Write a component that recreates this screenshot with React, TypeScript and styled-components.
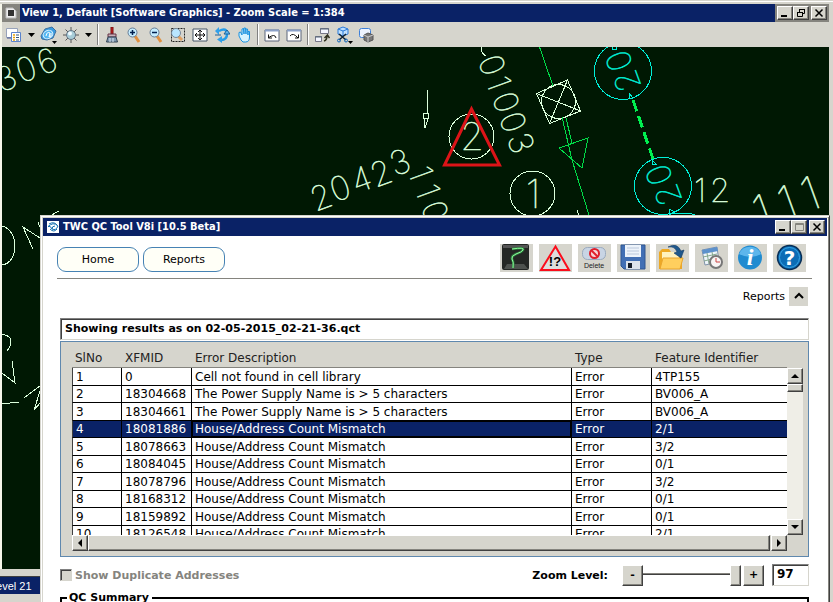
import React, { useState } from "react";
import styled, { createGlobalStyle, css } from "styled-components";

const face = "#d6d5cd";
const navy = "#0a2266";
const ui = '"DejaVu Sans", Verdana, sans-serif';
const caption = '"DejaVu Sans Condensed", "DejaVu Sans", Tahoma, sans-serif';

const Global = createGlobalStyle`
  *, *::before, *::after { box-sizing: border-box; }
  html, body, #root { height: 100%; margin: 0; }
  body { background: ${face}; overflow: hidden; font-family: ${ui}; font-size: 12px; color: #000; }
  button, input { font: inherit; color: inherit; margin: 0; padding: 0; border-radius: 0; }
`;

const raised = css`
  background: ${face};
  border: 1px solid;
  border-color: #fff #404040 #404040 #fff;
  box-shadow: inset -1px -1px 0 #85847e;
`;

const sunken = css`
  background: #fff;
  border: 1px solid;
  border-color: #808080 #d6d5cd #d6d5cd #808080;
  box-shadow: inset 1px 1px 0 #404040;
`;

const Desktop = styled.div`
  position: relative;
  display: flex;
  flex-direction: column;
  height: 100vh;
  padding: 4px 4px 0 2px;
  background: linear-gradient(${face} 1px, #fff 1px 2px, ${face} 2px 4px, transparent 4px),
    linear-gradient(90deg, #f6f6ea 2px, ${face} 2px);
  overflow: hidden;
`;

const TitleBar = styled.header`
  display: flex;
  align-items: center;
  flex: none;
  height: 18px;
  background: ${navy};
  color: #fff;
`;

const Title = styled.h1`
  flex: 1;
  margin: 0;
  font: bold 11px/18px ${caption};
  white-space: nowrap;
`;

const MainMark = styled.span`
  display: grid;
  place-items: center;
  width: 18px;
  height: 18px;
  margin-right: 2px;
  background: #85847e;
`;

const Brand = styled.span`
  display: grid;
  width: 12px;
  height: 12px;
  margin: 0 4px;
  background: #fff;
`;

const Captions = styled.div<{ $tray?: boolean }>`
  display: flex;
  align-items: center;
  height: 18px;
  padding: 0 2px;
  background: ${(p) => (p.$tray ? "#85847e" : navy)};
`;

const CaptionButton = styled.button<{ $apart?: boolean }>`
  ${raised}
  display: grid;
  place-items: center;
  width: 16px;
  height: 14px;
  margin-left: ${(p) => (p.$apart ? 2 : 0)}px;
  color: #000;
`;

const ToolStrip = styled.div`
  display: flex;
  align-items: center;
  flex: none;
  height: 25px;
  padding-left: 1px;
  background: ${face};
`;

const Tool = styled.button`
  display: grid;
  place-items: center;
  width: 22px;
  height: 24px;
  border: 0;
  background: none;
`;

const Drop = styled(Tool)`
  width: 13px;
`;

const Divider = styled.span`
  width: 2px;
  height: 21px;
  margin: 0 2px;
  border-left: 1px solid #808080;
  border-right: 1px solid #fff;
`;

const MapView = styled.main`
  flex: 1;
  min-height: 0;
  background: #001803;
  overflow: hidden;

  svg {
    display: block;
    width: 100%;
    height: 100%;
  }
`;

const StatusArea = styled.footer`
  flex: none;
  height: 33px;
  padding-top: 7px;
  margin: 0 0 0 -2px;
  background: ${face};
`;

const Status = styled.div`
  height: 18px;
  border-top: 1px solid #404040;
  background: ${navy};
  color: #fff;
  font: 11px/18px "Liberation Sans", Arial, sans-serif;
  text-indent: -10px;
`;

const Dialog = styled.section`
  position: absolute;
  top: 215px;
  right: 3px;
  bottom: -20px;
  left: 40px;
  display: flex;
  flex-direction: column;
  border: 1px solid ${face};
  border-right-color: #404040;
  box-shadow: inset 1px 1px 0 #fff, inset -1px 0 0 #85847e, inset 2px 2px 0 ${face};
  padding: 2px;
  background: #fff;
`;

const Content = styled.div`
  padding: 8px 15px 0 14px;
`;

const ActionBar = styled.nav`
  display: flex;
  align-items: flex-start;
  gap: 4px;
  height: 35px;
  border-bottom: 1px solid #85847e;
`;

const PillButton = styled.button`
  width: 82px;
  height: 25px;
  margin-top: 3px;
  border: 1px solid #4682b4;
  border-radius: 9px;
  background: #fffff7;
  font-size: 11px;
`;

const Tiles = styled.div`
  display: flex;
  gap: 6px;
  margin: 0 6px 0 auto;
`;

const Tile = styled.button`
  display: grid;
  place-items: center;
  width: 33px;
  height: 28px;
  border: 0;
  background: ${face};
`;

const Section = styled.div`
  margin: 0 3px;
`;

const Collapser = styled.div`
  display: flex;
  align-items: center;
  justify-content: flex-end;
  gap: 4px;
  height: 20px;
  margin: 7px 1px 12px 0;
  font-size: 11px;
`;

const SquareButton = styled.button`
  display: grid;
  place-items: center;
  width: 19px;
  height: 19px;
  border: 0;
  background: ${face};
`;

const ResultField = styled.input`
  ${sunken}
  display: block;
  width: 100%;
  height: 22px;
  padding: 0 4px 2px;
  font-size: 11px;
  font-weight: bold;
`;

const GridPanel = styled.div`
  margin-top: 1px;
  height: 216px;
  padding: 6px 5px 0 11px;
  border: 1px solid #5f88ae;
  background: ${face};
`;

const GridBody = styled.div`
  display: grid;
  grid-template-columns: minmax(0, 1fr) 16px;
  height: 187px;
`;

const Clip = styled.div`
  overflow: hidden;
`;

const Table = styled.table`
  width: 100%;
  border-collapse: separate;
  border-spacing: 0;
  table-layout: fixed;
  font-size: 12px;
  line-height: 16px;
  text-align: left;
  white-space: nowrap;

  th {
    height: 20px;
    padding: 1px 0 0 3px;
    border-bottom: 1px solid #85847e;
    font-weight: normal;
    color: #222;
  }

  td {
    height: 18px;
    padding: 0 0 0 3px;
    border-right: 1px solid #000;
    border-bottom: 1px solid #000;
    background: #fff;
  }

  tbody tr:nth-child(even) td {
    height: 17px;
  }

  td:first-child {
    border-left: 1px solid #404040;
  }

  td:last-child {
    border-right: 0;
  }

  tbody tr[aria-selected="true"] td {
    background: ${navy};
    color: #fff;
  }

  tbody tr[aria-selected="true"] td:nth-child(3) {
    box-shadow: inset 1px 1px 0 #000, inset -1px -1px 0 #000;
  }
`;

const Col = styled.col<{ $w?: number }>`
  width: ${(p) => (p.$w ? `${p.$w}px` : "auto")};
`;

const VScroll = styled.div`
  display: flex;
  flex-direction: column;
  margin-top: 20px;
  background: #efeee7;
`;

const HScroll = styled.div`
  display: flex;
  height: 16px;
  margin-right: 16px;
`;

const ScrollButton = styled.button`
  ${raised}
  display: grid;
  place-items: center;
  flex: none;
  width: 16px;
  height: 16px;
`;

const VThumb = styled.div`
  ${raised}
  height: 8px;
`;

const Track = styled.div`
  flex: 1;
`;

const HThumb = styled.div`
  ${raised}
  flex: 1;
  margin-right: 1px;
`;

const Controls = styled.div`
  display: flex;
  align-items: center;
  height: 22px;
  margin-top: 7px;
  font-size: 11px;
  font-weight: bold;
`;

const Check = styled.input`
  ${sunken}
  appearance: none;
  width: 12px;
  height: 12px;
  margin-right: 3px;
  background: ${face};
`;

const CheckLabel = styled.label`
  display: flex;
  align-items: center;
  margin-right: auto;
  color: #85847e;
`;

const ZoomLabel = styled.label`
  margin-right: 14px;
`;

const StepButton = styled.button`
  ${raised}
  width: 21px;
  height: 21px;
  line-height: 16px;
`;

const Slider = styled.input`
  appearance: none;
  width: 98px;
  height: 21px;
  margin-right: 2px;
  background: linear-gradient(#85847e 1px, #404040 1px) center 8px / 100% 2px no-repeat;

  &::-webkit-slider-thumb {
    ${raised}
    appearance: none;
    width: 11px;
    height: 21px;
  }
`;

const ZoomField = styled.input`
  ${sunken}
  width: 37px;
  height: 22px;
  margin-left: 8px;
  padding: 0 4px 3px;
  font-size: 12px;
`;

const Summary = styled.fieldset`
  height: 60px;
  margin: 5px 0 0;
  padding: 0 5px;
  border: 2px solid #000;
  font-size: 11px;
  font-weight: bold;

  legend {
    padding: 0 3px 0 2px;
    line-height: 14px;
  }
`;

const Glyph = ({ x, y, r = 0, s = 33, c = "#dcffdc", children }: {
  x: number; y: number; r?: number; s?: number; c?: string; children: string;
}) => (
  <text
    transform={`translate(${x} ${y}) rotate(${r})`}
    y={Math.round(s * 0.36)}
    fontSize={s}
    fontFamily='Inter, Roboto, sans-serif'
    fontWeight={100}
    textAnchor="middle"
    fill={c}
    stroke={c}
    strokeWidth="0.5"
  >
    {children}
  </text>
);

const pale = "#dcffdc";
const cyan = "#00f0d8";

const marks: [string, number, number, number][] = [
  ["3", 6, 78, -23], ["0", 26, 69, -20], ["6", 47, 61, -20],
  ["2", 321, 197, -20], ["0", 340, 188, -20], ["4", 361, 179, -20], ["2", 381, 173, -20], ["3", 400, 162, -20],
  ["1", 421, 173, 70], ["1", 428, 191, 70], ["0", 435, 211, 70],
  ["0", 492, 65, 70], ["1", 499, 83, 70], ["0", 506, 102, 70], ["0", 513, 122, 70], ["3", 521, 143, 70],
  ["1", 700, 190, 0], ["2", 720, 190, 0],
];

const Drawing = () => (
  <svg viewBox="2 47 827 522" preserveAspectRatio="xMinYMin slice" fill="none" role="img" aria-label="Network map">
    {marks.map(([t, x, y, r], i) => <Glyph key={i} x={x} y={y} r={r}>{t}</Glyph>)}
    <Glyph x={472} y={136} s={38}>2</Glyph>
    <Glyph x={533} y={194} s={40}>1</Glyph>
    <Glyph x={619} y={61} r={-110} c={cyan}>0</Glyph>
    <Glyph x={627} y={81} r={-110} c={cyan}>2</Glyph>
    <Glyph x={659} y={175} r={-110} c={cyan}>0</Glyph>
    <Glyph x={668} y={195} r={-110} c={cyan}>2</Glyph>
    <Glyph x={762} y={211} r={-20} s={46}>1</Glyph>
    <Glyph x={787} y={202} r={-20} s={46}>1</Glyph>
    <Glyph x={810} y={193} r={-20} s={46}>1</Glyph>
    <g stroke={pale} shapeRendering="crispEdges">
      <circle cx="471.500" cy="136.500" r="22.500" />
      <circle cx="532.500" cy="193.500" r="22.500" />
      <path d="M427.500 90V113M423.500 113.500h5v5h-5zM424 119l1 9 3-9M482 47q-2 6 4 9" />
      <path d="M536.500 93.500L567.500 80 580.500 111 549.500 123.500zM536.500 93.500L580.500 111M567.500 80L549.500 123.500" />
      <circle cx="558.500" cy="101.500" r="17" />
      <path d="M2 226C10 228 15 236 15 246S10 264 2 265M33 249L23 227 40 238M38 222l3 8M50 216l9-5" />
      <path d="M2 334q9 2 9 7t-4 10M12 361l3 22-13-10M24 398l17-13M41 388l-7 22 7-8M2 404l17-2M577 210l2 6" />
    </g>
    <g stroke="#00dc48" shapeRendering="crispEdges">
      <path d="M539.500 47L553 86M562 117L572 160 589 215M566 118L572 143M559 148L588 138 582 168z" />
      <path d="M633 100L653 159" stroke="#00f050" strokeWidth="3" strokeDasharray="12 5" />
    </g>
    <g stroke={cyan} shapeRendering="crispEdges">
      <circle cx="623" cy="71" r="28.500" />
      <circle cx="663" cy="186" r="28.500" />
      <path d="M629 93v6l4-1zM652 160v4h4zM669 209v6l6-3zM673 213h16l6 2M612 49h4v-2M612 49v-2" />
    </g>
    <path d="M471.500 109L444.500 165H499.500z" stroke="#dc1418" strokeWidth="3" />
  </svg>
);

const Ico = ({ w = 16, h = 16, children }: { w?: number; h?: number; children: React.ReactNode }) => (
  <svg width={w} height={h} viewBox={`0 0 ${w} ${h}`} fill="none" aria-hidden="true">{children}</svg>
);

const Arrow = ({ d }: { d: "up" | "down" | "left" | "right" }) => {
  const paths = { up: "M0 6h8L4 2z", down: "M0 2h8L4 6z", left: "M6 0v8L2 4z", right: "M2 0v8l4-4z" };
  return <Ico w={8} h={8}><path d={paths[d]} fill="#000" /></Ico>;
};

const Lens = ({ minus }: { minus?: boolean }) => (
  <Ico>
    <path d="M9 9l4 6" stroke="#e09040" strokeWidth="3" />
    <circle cx="6.500" cy="5.500" r="4.500" fill="#c4ecff" stroke="#667d96" />
    <path d={minus ? "M4 5.500h5" : "M4 5.500h5M6.500 3v5"} stroke="#002050" strokeWidth="1.500" />
  </Ico>
);

const icons = {
  view: <Ico><path d="M.5 1.500h11v9H.5z" fill="#fff" stroke="#98a3ba" /><path d="M1 11h6" stroke="#405090" /><path d="M5.500 5.500h9v9h-9z" fill="#fff" stroke="#5b83cc" /><path d="M7 8h2M7 10.500h2M7 13h2" stroke="#e8a000" strokeWidth="1.500" /><path d="M10 8h3M10 10.500h3M10 13h3" stroke="#357" /></Ico>,
  display: <Ico w={18} h={18}><path d="M1 10l4-7 7-2 4 4-3 7-6 2-5-1z" fill="#3a9be0" stroke="#3d6fa0" /><ellipse cx="8" cy="8.500" rx="5" ry="4" transform="rotate(-25 8 8.500)" fill="#57b8f2" stroke="#e4f6ff" /><path d="M6 10q1-5 4-3l-1 4q3 0 2-4" stroke="#fff" /><path d="M12 15h5l-2.500 3z" fill="#000" /></Ico>,
  light: <Ico><path d="M8 0v16M0 8h16M2.500 2.500l11 11M13.500 2.500l-11 11" stroke="#555" /><circle cx="8" cy="8" r="4.500" fill="#a8cdd8" stroke="#678" /><circle cx="7" cy="6.500" r="2" fill="#effaff" /></Ico>,
  brush: <Ico><path d="M7 0h2v7H7z" fill="#d02020" stroke="#711" /><path d="M4 7h8v3H4z" fill="#c8b0b8" stroke="#634" /><path d="M4 10L2.500 15h11L12 10z" fill="#8098b0" stroke="#345" /><path d="M6 11v4M9 11v4" stroke="#dde8f4" /></Ico>,
  area: <Ico><path d="M1.500 1.500h13v13h-13z" stroke="#222" strokeDasharray="2 1" /><path d="M8 9l4 4" stroke="#e0a060" strokeWidth="3" /><circle cx="6" cy="6" r="4.500" fill="#b9e6ff" stroke="#789" /></Ico>,
  fit: <Ico><path d="M1 2h14v12H1z" fill="#fff" stroke="#456" /><path d="M3 8h10M8 3v10M5 6L3 8l2 2M11 6l2 2-2 2M6 5l2-2 2 2M6 11l2 2 2-2" stroke="#111" /></Ico>,
  rotate: <Ico><path d="M5 4q8-4 8 3 0 6-6 6" stroke="#249be8" strokeWidth="2.500" /><path d="M5 0v8L1 4zM8 9v7l-5-3.500z" fill="#31a0ea" /><path d="M1 8h6M10 7h6l-3-4z" stroke="#1c5f98" fill="#5fbaf2" /></Ico>,
  hand: <Ico><path d="M3 9V5.500L4.500 5 6 8V2l1.500-.5L8 7V1h1.500L10 7V2h1.500L12 8V4.500h1.500V10q0 5-4 5H7Q5 14 3 9z" fill="#d6f3ff" stroke="#1791e0" /></Ico>,
  prev: <Ico><path d="M1 3h14v11H1z" fill="#fff" stroke="#5b6478" /><path d="M1 3.500h14" stroke="#8ba0c8" strokeWidth="2" /><path d="M12 11Q11 6 4 11M4.500 7.500V11H8" stroke="#111" /></Ico>,
  next: <Ico><path d="M1 3h14v11H1z" fill="#fff" stroke="#5b6478" /><path d="M1 3.500h14" stroke="#8ba0c8" strokeWidth="2" /><path d="M4 9Q7 5 12 11M12.500 7.500V11H9" stroke="#111" /></Ico>,
  copy: <Ico><path d="M6.500 1.500h8v5h-8zM1.500 9.500h6v5h-6z" fill="#f4f6ff" stroke="#778" /><path d="M6 2h9M1 10h7" stroke="#567" /><path d="M10 14q3-1 3-5M10.500 11l3-3 2 3" stroke="#332" strokeWidth="1.500" /></Ico>,
  clip: <Ico w={18} h={18}><path d="M3 3l5-2 5 2v5l-5 2-5-2z" fill="#bfe0ff" stroke="#2a7ad8" /><path d="M3 3l5 2 5-2M8 5v5" stroke="#2a7ad8" /><path d="M4 8l7 6M11 8l-7 6" stroke="#123" strokeWidth="1.500" /><circle cx="4" cy="14.500" r="1.500" stroke="#16b" /><circle cx="11" cy="14.500" r="1.500" stroke="#16b" /><path d="M13 15h5l-2.500 3z" fill="#000" /></Ico>,
  mask: <Ico><rect x="1.500" y="1.500" width="11" height="9" rx="2" fill="#eef4ff" stroke="#3e80d8" /><path d="M6 8l4-2 5 2v5l-5 2-4-2z" fill="#777" stroke="#555" /><path d="M6 8l4 2 5-2M10 10v5" stroke="#ccc" /></Ico>,
};

const TileArt = ({ w = 33, children }: { w?: number; children: React.ReactNode }) => <Ico w={w} h={28}>{children}</Ico>;

const tiles: [string, React.ReactNode][] = [
  ["Trace", <TileArt><rect x="2" y="0" width="27" height="26" rx="2" fill="#242724" /><path d="M3 1h25v3H3z" fill="#555" /><path d="M4 25l3-5h17l4 5z" fill="#6a706a" opacity=".6" /><path d="M12 5q13-2 11 1-1 2-7 4-5 2-4 5 2 3 1 9" stroke="#2f7a3e" strokeWidth="2.500" /><path d="M12 5q13-2 11 1-1 2-7 4-5 2-4 5 2 3 1 9" stroke="#8dff9c" /></TileArt>],
  ["Errors", <TileArt><path d="M16.500 2.500L2 26h28z" fill="#ddd" stroke="#fb0d1c" strokeWidth="2" /><text x="16" y="22" textAnchor="middle" fontFamily="Liberation Sans, Arial, sans-serif" fontSize="13" fontWeight="bold" fill="#000">!?</text></TileArt>],
  ["Delete", <TileArt><rect x="4.500" y="3.500" width="23" height="12" rx="5" fill="#c8d4e4" stroke="#9aaabe" /><circle cx="16.500" cy="9.500" r="4.500" fill="#f6d6d8" stroke="#e0202c" strokeWidth="2" /><path d="M13.500 6.500l6 6" stroke="#e0202c" strokeWidth="2" /><text x="16" y="24" textAnchor="middle" fontFamily="Liberation Sans, Arial, sans-serif" fontSize="7" fill="#222">Delete</text></TileArt>],
  ["Save", <TileArt><path d="M4 1h24v24H7l-3-3z" fill="#426fb4" stroke="#315790" /><path d="M8 1h16v12H8z" fill="#edf3fa" /><path d="M10 4h12M10 7h12M10 10h12" stroke="#bbc8dc" /><path d="M9 17h14v8H9z" fill="#dde3eb" /><path d="M11 19h4v5h-4z" fill="#151c28" /></TileArt>],
  ["Open", <TileArt><path d="M3 8l3-3h7l2 3h11v17H3z" fill="#eda925" /><path d="M6 8h17v8H6z" fill="#fff2be" /><path d="M4 25l3-11h20l-3 11z" fill="#ffcf5e" stroke="#e9a52d" /><path d="M12 3q9-5 13 4l3-1-3 8-7-5 3-1q-2-6-9-5z" fill="#20588c" stroke="#143d68" strokeWidth=".6" /></TileArt>],
  ["Schedule", <TileArt><path d="M7 6l15-3 2 15-14 3z" fill="#eef4fa" stroke="#8193aa" /><path d="M7 6l15-3 1 4L8 10z" fill="#5d91cc" /><path d="M8 13l14-3M9 17l12-3M12 9l2 11M17 8l2 10" stroke="#86a98f" /><circle cx="21" cy="18" r="6" fill="#f8f4f4" stroke="#777" strokeWidth="2" /><path d="M21 14v4h4" stroke="#c44" /></TileArt>],
  ["Information", <TileArt><circle cx="16" cy="13.500" r="12" fill="#208bd0" /><path d="M5 10a12 12 0 0 1 22 0q-10 6-22 0z" fill="#5db6ec" /><text x="16" y="21" textAnchor="middle" fontFamily="Liberation Serif, serif" fontSize="24" fontStyle="italic" fontWeight="bold" fill="#fff">i</text></TileArt>],
  ["Help", <TileArt><circle cx="16.500" cy="13.500" r="12" fill="#0b6db6" stroke="#082e56" strokeWidth="1.500" /><circle cx="16.500" cy="13.500" r="10" stroke="#39a5e5" /><text x="16.500" y="21" textAnchor="middle" fontFamily="DejaVu Sans, sans-serif" fontSize="20" fontWeight="bold" fill="#fff">?</text></TileArt>],
];

const rows = [
  ["1", "0", "Cell not found in cell library", "Error", "4TP155"],
  ["2", "18304668", "The Power Supply Name is > 5 characters", "Error", "BV006_A"],
  ["3", "18304661", "The Power Supply Name is > 5 characters", "Error", "BV006_A"],
  ["4", "18081886", "House/Address Count Mismatch", "Error", "2/1"],
  ["5", "18078663", "House/Address Count Mismatch", "Error", "3/2"],
  ["6", "18084045", "House/Address Count Mismatch", "Error", "0/1"],
  ["7", "18078796", "House/Address Count Mismatch", "Error", "3/2"],
  ["8", "18168312", "House/Address Count Mismatch", "Error", "0/1"],
  ["9", "18159892", "House/Address Count Mismatch", "Error", "0/1"],
  ["10", "18126548", "House/Address Count Mismatch", "Error", "2/1"],
];

const Minimize = () => <Ico w={10} h={10}><path d="M1 8h6" stroke="#000" strokeWidth="2" /></Ico>;
const Close = () => <Ico w={10} h={10}><path d="M1.500 1.500l7 7M8.500 1.500l-7 7" stroke="#000" strokeWidth="1.500" /></Ico>;
const Restore = () => <Ico w={10} h={10}><path d="M3.500 4V1.500h5v4H7M3 1.500h6M1.500 4.500h5v4h-5zM1 4.500h6" stroke="#000" /></Ico>;
const Maximize = () => <Ico w={10} h={10}><path d="M1.500 1.500h8v7h-8zM1 2.500h8" stroke="#85847e" /></Ico>;

export default function App() {
  const [selected, setSelected] = useState(3);
  const [zoom, setZoom] = useState(97);
  return (
    <>
      <Global />
      <Desktop>
        <TitleBar>
          <MainMark><Ico w={12} h={12}><path d="M1 1h7l3 3v7H1z" fill="#eee" stroke="#bbb" /><path d="M3 3h6v6H3z" fill="#333" /></Ico></MainMark>
          <Title>View 1, Default [Software Graphics] - Zoom Scale = 1:384</Title>
          <Captions $tray>
            <CaptionButton aria-label="Minimize view"><Minimize /></CaptionButton>
            <CaptionButton aria-label="Restore view"><Restore /></CaptionButton>
            <CaptionButton aria-label="Close view" $apart><Close /></CaptionButton>
          </Captions>
        </TitleBar>
        <ToolStrip role="toolbar" aria-label="View tools">
          <Tool aria-label="View attributes">{icons.view}</Tool>
          <Drop aria-label="View options"><Ico w={8} h={4}><path d="M0 0h7L3.500 4z" fill="#000" /></Ico></Drop>
          <Tool aria-label="Display style">{icons.display}</Tool>
          <Tool aria-label="Brightness">{icons.light}</Tool>
          <Drop aria-label="Brightness options"><Ico w={8} h={4}><path d="M0 0h7L3.500 4z" fill="#000" /></Ico></Drop>
          <Divider />
          <Tool aria-label="Update view">{icons.brush}</Tool>
          <Tool aria-label="Zoom in"><Lens /></Tool>
          <Tool aria-label="Zoom out"><Lens minus /></Tool>
          <Tool aria-label="Window area">{icons.area}</Tool>
          <Tool aria-label="Fit view">{icons.fit}</Tool>
          <Tool aria-label="Rotate view">{icons.rotate}</Tool>
          <Tool aria-label="Pan view">{icons.hand}</Tool>
          <Divider />
          <Tool aria-label="View previous">{icons.prev}</Tool>
          <Tool aria-label="View next">{icons.next}</Tool>
          <Divider />
          <Tool aria-label="Copy view">{icons.copy}</Tool>
          <Tool aria-label="Clip volume">{icons.clip}</Tool>
          <Tool aria-label="Clip mask">{icons.mask}</Tool>
        </ToolStrip>
        <MapView><Drawing /></MapView>
        <StatusArea><Status>Level 21</Status></StatusArea>

        <Dialog role="dialog" aria-label="TWC QC Tool">
          <TitleBar>
            <Brand><Ico w={12} h={12}><path d="M1 6q5-6 10-1-2 5-6 3 0-3 3-3M2 3q5-3 8 1M3 8q4 4 7 0M1 5q3 0 4 3" stroke="#1570b0" /></Ico></Brand>
            <Title as="h2">TWC QC Tool V8i [10.5 Beta]</Title>
            <Captions>
              <CaptionButton aria-label="Minimize"><Minimize /></CaptionButton>
              <CaptionButton aria-label="Maximize" disabled><Maximize /></CaptionButton>
              <CaptionButton aria-label="Close" $apart><Close /></CaptionButton>
            </Captions>
          </TitleBar>
          <Content>
            <ActionBar>
              <PillButton>Home</PillButton>
              <PillButton>Reports</PillButton>
              <Tiles>{tiles.map(([name, art]) => <Tile key={name} aria-label={name}>{art}</Tile>)}</Tiles>
            </ActionBar>
            <Section>
              <Collapser>
                <span id="reports">Reports</span>
                <SquareButton aria-labelledby="reports"><Ico w={10} h={8}><path d="M1 6l4-4 4 4" stroke="#000" strokeWidth="2" /></Ico></SquareButton>
              </Collapser>
              <ResultField aria-label="Result file" readOnly value="Showing results as on 02-05-2015_02-21-36.qct" />
              <GridPanel>
                <GridBody>
                  <Clip>
                    <Table>
                      <colgroup><Col $w={50} /><Col $w={70} /><Col /><Col $w={80} /><Col $w={135} /></colgroup>
                      <thead>
                        <tr><th>SlNo</th><th>XFMID</th><th>Error Description</th><th>Type</th><th>Feature Identifier</th></tr>
                      </thead>
                      <tbody>
                        {rows.map((r, i) => (
                          <tr key={r[0]} aria-selected={i === selected} onClick={() => setSelected(i)}>
                            {r.map((c, j) => <td key={j}>{c}</td>)}
                          </tr>
                        ))}
                      </tbody>
                    </Table>
                  </Clip>
                  <VScroll>
                    <ScrollButton aria-label="Scroll up"><Arrow d="up" /></ScrollButton>
                    <VThumb />
                    <Track />
                    <ScrollButton aria-label="Scroll down"><Arrow d="down" /></ScrollButton>
                  </VScroll>
                </GridBody>
                <HScroll>
                  <ScrollButton aria-label="Scroll left"><Arrow d="left" /></ScrollButton>
                  <HThumb />
                  <ScrollButton aria-label="Scroll right"><Arrow d="right" /></ScrollButton>
                </HScroll>
              </GridPanel>
              <Controls>
                <CheckLabel><Check type="checkbox" disabled />Show Duplicate Addresses</CheckLabel>
                <ZoomLabel htmlFor="zoom">Zoom Level:</ZoomLabel>
                <StepButton aria-label="Decrease zoom" onClick={() => setZoom(Math.max(0, zoom - 1))}>-</StepButton>
                <Slider id="zoom" type="range" min={0} max={97} value={zoom} onChange={(e) => setZoom(Number(e.target.value))} />
                <StepButton aria-label="Increase zoom" onClick={() => setZoom(Math.min(97, zoom + 1))}>+</StepButton>
                <ZoomField aria-label="Zoom value" value={zoom} onChange={(e) => setZoom(Number(e.target.value) || 0)} />
              </Controls>
              <Summary><legend>QC Summary</legend></Summary>
            </Section>
          </Content>
        </Dialog>
      </Desktop>
    </>
  );
}
